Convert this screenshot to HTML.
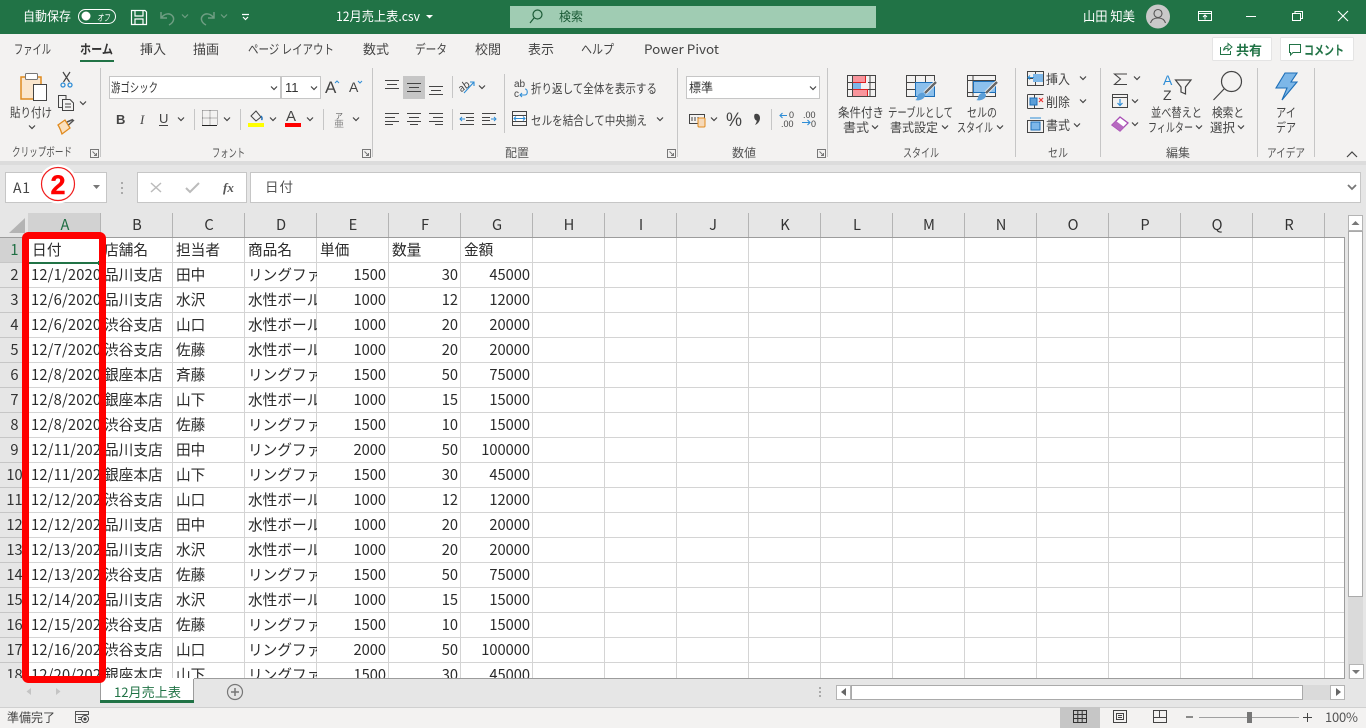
<!DOCTYPE html>
<html lang="ja"><head><meta charset="utf-8"><title>12月売上表.csv - Excel</title>
<style>
*{box-sizing:border-box}
html,body{margin:0;padding:0;width:1366px;height:728px;overflow:hidden;background:#e6e6e6;font-family:"Liberation Sans","Noto Sans CJK JP",sans-serif}
.a{position:absolute}
#title{left:0;top:0;width:1366px;height:34px;background:#217346}
#ribbon{left:0;top:34px;width:1366px;height:127px;background:#f3f2f1}
#shadow{left:0;top:161px;width:1366px;height:4px;background:#dcdcdc}
#fbar{left:0;top:165px;width:1366px;height:48px;background:#e6e6e6}
.box{background:#fff;border:1px solid #c6c6c6}
#colh{left:0;top:213px;width:1345px;height:25px;background:#e6e6e6;border-bottom:1px solid #9c9c9c}
#colh span{position:absolute;top:0;height:24px;width:72px;padding-left:1px;border-right:1px solid #b4b4b4;text-align:center;font:14.67px/24px "Noto Sans CJK JP",sans-serif;color:#333}
#rowh{left:0;top:238px;width:29px;height:440px;overflow:hidden;background:#e6e6e6;border-right:1px solid #9c9c9c}
#rowh span{display:block;height:25px;width:28px;padding-left:1px;border-bottom:1px solid #c6c6c6;text-align:center;font:14.67px/23px "Noto Sans CJK JP",sans-serif;color:#333}
#sheet{left:29px;top:238px;width:1316px;height:441px;overflow:hidden;background-color:#fff;border-right:1px solid #9c9c9c;border-bottom:1px solid #9c9c9c;background-image:linear-gradient(to left,#d4d4d4 1px,transparent 1px),linear-gradient(to top,#d4d4d4 1px,transparent 1px);background-size:72px 25px}
table{border-collapse:collapse;table-layout:fixed;width:504px;position:absolute;left:0;top:0}
td{width:72px;height:25px;padding:0 3px 0 3px;overflow:hidden;white-space:nowrap;vertical-align:top;font:14.67px/23px "Noto Sans CJK JP",sans-serif;color:#2b2b2b}
td.d{padding-left:2px;padding-right:0;letter-spacing:.2px}
td.n{text-align:right}
#tabs{left:0;top:679px;width:1366px;height:28px;background:#e6e6e6}
#status{left:0;top:707px;width:1366px;height:21px;background:#f3f2f1;border-top:1px solid #d0d0d0}
svg{position:absolute;left:0;top:0;font-family:"Noto Sans CJK JP",sans-serif}
</style></head><body>
<div id="title" class="a"></div>
<div id="ribbon" class="a"></div>
<div id="shadow" class="a"></div>
<div id="fbar" class="a"></div>
<div class="a box" style="left:5px;top:172px;width:102px;height:31px"></div>
<div class="a box" style="left:137px;top:172px;width:110px;height:31px"></div>
<div class="a box" style="left:250px;top:172px;width:1111px;height:31px"></div>
<div id="colh" class="a">
<span style="left:28px;width:73px;padding-left:2px;background:#d2d2d2;color:#1f6e43">A</span><span style="left:101px">B</span><span style="left:173px">C</span><span style="left:245px">D</span><span style="left:317px">E</span><span style="left:389px">F</span><span style="left:461px">G</span><span style="left:533px">H</span><span style="left:605px">I</span><span style="left:677px">J</span><span style="left:749px">K</span><span style="left:821px">L</span><span style="left:893px">M</span><span style="left:965px">N</span><span style="left:1037px">O</span><span style="left:1109px">P</span><span style="left:1181px">Q</span><span style="left:1253px">R</span>
</div>
<div id="rowh" class="a"><span style="background:#d2d2d2;color:#1f6e43">1</span><span>2</span><span>3</span><span>4</span><span>5</span><span>6</span><span>7</span><span>8</span><span>9</span><span>10</span><span>11</span><span>12</span><span>13</span><span>14</span><span>15</span><span>16</span><span>17</span><span>18</span></div>
<div id="sheet" class="a">
<table>
<tr><td class="d" style="padding-left:3px">日付</td><td>店舗名</td><td>担当者</td><td>商品名</td><td>単価</td><td>数量</td><td>金額</td></tr>
<tr><td class="d">12/1/2020</td><td>品川支店</td><td>田中</td><td>リングファ</td><td class="n">1500</td><td class="n">30</td><td class="n">45000</td></tr>
<tr><td class="d">12/6/2020</td><td>品川支店</td><td>水沢</td><td>水性ボール</td><td class="n">1000</td><td class="n">12</td><td class="n">12000</td></tr>
<tr><td class="d">12/6/2020</td><td>渋谷支店</td><td>山口</td><td>水性ボール</td><td class="n">1000</td><td class="n">20</td><td class="n">20000</td></tr>
<tr><td class="d">12/7/2020</td><td>渋谷支店</td><td>佐藤</td><td>水性ボール</td><td class="n">1000</td><td class="n">20</td><td class="n">20000</td></tr>
<tr><td class="d">12/8/2020</td><td>銀座本店</td><td>斉藤</td><td>リングファ</td><td class="n">1500</td><td class="n">50</td><td class="n">75000</td></tr>
<tr><td class="d">12/8/2020</td><td>銀座本店</td><td>山下</td><td>水性ボール</td><td class="n">1000</td><td class="n">15</td><td class="n">15000</td></tr>
<tr><td class="d">12/8/2020</td><td>渋谷支店</td><td>佐藤</td><td>リングファ</td><td class="n">1500</td><td class="n">10</td><td class="n">15000</td></tr>
<tr><td class="d">12/11/2020</td><td>品川支店</td><td>田中</td><td>リングファ</td><td class="n">2000</td><td class="n">50</td><td class="n">100000</td></tr>
<tr><td class="d">12/11/2020</td><td>銀座本店</td><td>山下</td><td>リングファ</td><td class="n">1500</td><td class="n">30</td><td class="n">45000</td></tr>
<tr><td class="d">12/12/2020</td><td>渋谷支店</td><td>山口</td><td>水性ボール</td><td class="n">1000</td><td class="n">12</td><td class="n">12000</td></tr>
<tr><td class="d">12/12/2020</td><td>品川支店</td><td>田中</td><td>水性ボール</td><td class="n">1000</td><td class="n">20</td><td class="n">20000</td></tr>
<tr><td class="d">12/13/2020</td><td>品川支店</td><td>水沢</td><td>水性ボール</td><td class="n">1000</td><td class="n">20</td><td class="n">20000</td></tr>
<tr><td class="d">12/13/2020</td><td>渋谷支店</td><td>佐藤</td><td>リングファ</td><td class="n">1500</td><td class="n">50</td><td class="n">75000</td></tr>
<tr><td class="d">12/14/2020</td><td>品川支店</td><td>水沢</td><td>水性ボール</td><td class="n">1000</td><td class="n">15</td><td class="n">15000</td></tr>
<tr><td class="d">12/15/2020</td><td>渋谷支店</td><td>佐藤</td><td>リングファ</td><td class="n">1500</td><td class="n">10</td><td class="n">15000</td></tr>
<tr><td class="d">12/16/2020</td><td>渋谷支店</td><td>山口</td><td>リングファ</td><td class="n">2000</td><td class="n">50</td><td class="n">100000</td></tr>
<tr><td class="d">12/20/2020</td><td>銀座本店</td><td>山下</td><td>リングファ</td><td class="n">1500</td><td class="n">30</td><td class="n">45000</td></tr>
</table>
</div>
<div id="tabs" class="a"></div>
<div id="status" class="a"></div>

<svg width="1366" height="728" viewBox="0 0 1366 728" xmlns="http://www.w3.org/2000/svg">
<defs>
<path id="c" d="M-3 -1.500L0 1.500L3 -1.500" fill="none" stroke="#444" stroke-width="1.200"/>
<path id="cw" d="M-3 -1.500L0 1.500L3 -1.500" fill="none" stroke="#6f9e83" stroke-width="1.200"/>
<path id="lau" d="M1.500 1.500H9.500V9.500H1.500ZM3.500 3.500L7.500 7.500M7.500 5V7.500H5" fill="none" stroke="#777" stroke-width="1"/>
</defs>

<!-- title bar -->
<g fill="#fff">
<text x="23" y="21" font-size="13" textLength="48" lengthAdjust="spacingAndGlyphs">自動保存</text>
<text x="336" y="21" font-size="13" textLength="84" lengthAdjust="spacingAndGlyphs">12月売上表.csv</text>
<path d="M426 15h7l-3.500 3.500z"/>
<text x="1083" y="21" font-size="13" textLength="52" lengthAdjust="spacingAndGlyphs">山田 知美</text>
<text x="97" y="21" font-size="9.500" font-style="italic" textLength="13" lengthAdjust="spacingAndGlyphs">オフ</text>
<circle cx="86" cy="16" r="4.500"/>
</g>
<rect x="78.500" y="9.500" width="37" height="14" rx="7" fill="none" stroke="#fff"/>
<path d="M131.500 10.500H145L146.500 12V24.500H131.500ZM135 10.500V16H143V10.500M135 24.500V19H143V24.500" fill="none" stroke="#fff" stroke-width="1.200"/>
<path d="M161 12V18H167M161.500 17.500C165 13 170 13 172.500 16C175 19 173 23 169 25" fill="none" stroke="#6f9e83" stroke-width="1.500"/>
<use href="#cw" x="185" y="16"/>
<path d="M214 12V18H208M213.500 17.500C210 13 205 13 202.500 16C200 19 202 23 206 25" fill="none" stroke="#6f9e83" stroke-width="1.500"/>
<use href="#cw" x="224" y="16"/>
<path d="M242 14.500H249M243 17L245.500 19.500L248 17" fill="none" stroke="#fff" stroke-width="1.200"/>
<rect x="510" y="6" width="366" height="22" fill="#a0ccb3"/>
<circle cx="537.500" cy="14.500" r="4.500" fill="none" stroke="#1c5b37" stroke-width="1.200"/>
<path d="M534 18L530 23" stroke="#1c5b37" stroke-width="1.200"/>
<text x="559" y="21" font-size="12.500" fill="#1c5b37" textLength="24" lengthAdjust="spacingAndGlyphs">検索</text>
<circle cx="1158" cy="16.500" r="12" fill="#c9c9c9"/>
<circle cx="1158" cy="13.500" r="4" fill="none" stroke="#555" stroke-width="1.100"/>
<path d="M1150.500 23C1151.500 19.500 1154 18 1158 18C1162 18 1164.500 19.500 1165.500 23" fill="none" stroke="#555" stroke-width="1.100"/>
<path d="M1198.500 11.500H1211.500V20.500H1198.500ZM1198.500 13.500H1211.500M1205 19.500V15M1203 17L1205 15L1207 17" fill="none" stroke="#fff"/>
<path d="M1246 16.500H1256" stroke="#fff" stroke-width="1"/>
<path d="M1292.500 13.500H1300.500V20.500H1292.500ZM1295 13.500V11.500H1302.500V18.500H1300.500" fill="none" stroke="#fff"/>
<path d="M1338 11L1348 21M1348 11L1338 21" stroke="#fff" stroke-width="1.100"/>

<!-- ribbon tabs -->
<g fill="#444" font-size="13">
<text x="14" y="54" textLength="37" lengthAdjust="spacingAndGlyphs">ファイル</text>
<text x="80" y="54" textLength="33" lengthAdjust="spacingAndGlyphs" font-weight="700" fill="#333">ホーム</text>
<text x="140" y="54" textLength="26" lengthAdjust="spacingAndGlyphs">挿入</text>
<text x="193" y="54" textLength="26" lengthAdjust="spacingAndGlyphs">描画</text>
<text x="248" y="54" textLength="86" lengthAdjust="spacingAndGlyphs">ページ レイアウト</text>
<text x="363" y="54" textLength="26" lengthAdjust="spacingAndGlyphs">数式</text>
<text x="415" y="54" textLength="32" lengthAdjust="spacingAndGlyphs">データ</text>
<text x="475" y="54" textLength="26" lengthAdjust="spacingAndGlyphs">校閲</text>
<text x="528" y="54" textLength="26" lengthAdjust="spacingAndGlyphs">表示</text>
<text x="581" y="54" textLength="33" lengthAdjust="spacingAndGlyphs">ヘルプ</text>
<text x="644" y="54" textLength="75" lengthAdjust="spacingAndGlyphs">Power Pivot</text>
</g>
<rect x="80" y="60" width="34" height="2" fill="#217346"/>
<rect x="1212.500" y="37.500" width="59" height="23" rx="1" fill="#fff" stroke="#e4e4e4"/>
<rect x="1280.500" y="37.500" width="73" height="23" rx="1" fill="#fff" stroke="#e4e4e4"/>
<path d="M1220.500 47V54.500H1230.500V51M1223.500 50.500C1224 47.500 1225.500 46 1228 46V43.500L1232 47L1228 50.500V48.300C1226 48.300 1224.500 49 1223.500 50.500Z" fill="none" stroke="#217346"/>
<text x="1236" y="55" font-size="13" font-weight="700" fill="#217346" textLength="26" lengthAdjust="spacingAndGlyphs">共有</text>
<path d="M1289.500 44.500H1300.500V52.500H1293L1290.500 55V52.500H1289.500Z" fill="none" stroke="#217346"/>
<text x="1304" y="55" font-size="13" font-weight="700" fill="#217346" textLength="40" lengthAdjust="spacingAndGlyphs">コメント</text>

<!-- separators -->
<g fill="#c6c6c6">
<rect x="100" y="68" width="1" height="89"/><rect x="372" y="68" width="1" height="89"/><rect x="677" y="68" width="1" height="89"/><rect x="827" y="68" width="1" height="89"/><rect x="1015" y="68" width="1" height="89"/><rect x="1100" y="68" width="1" height="89"/><rect x="1257" y="68" width="1" height="89"/><rect x="1314" y="68" width="1" height="89"/>
<rect x="194" y="109" width="1" height="21"/><rect x="240" y="109" width="1" height="21"/><rect x="323" y="109" width="1" height="21"/>
<rect x="452" y="76" width="1" height="22"/><rect x="452" y="109" width="1" height="21"/><rect x="504" y="74" width="1" height="59"/><rect x="771" y="109" width="1" height="21"/>
</g>

<!-- group labels -->
<g fill="#555" font-size="12">
<text x="12" y="156" textLength="60" lengthAdjust="spacingAndGlyphs">クリップボード</text>
<text x="212" y="157" textLength="33" lengthAdjust="spacingAndGlyphs">フォント</text>
<text x="505" y="157" textLength="24" lengthAdjust="spacingAndGlyphs">配置</text>
<text x="732" y="157" textLength="24" lengthAdjust="spacingAndGlyphs">数値</text>
<text x="903" y="157" textLength="36" lengthAdjust="spacingAndGlyphs">スタイル</text>
<text x="1048" y="157" textLength="20" lengthAdjust="spacingAndGlyphs">セル</text>
<text x="1166" y="157" textLength="24" lengthAdjust="spacingAndGlyphs">編集</text>
<text x="1267" y="157" textLength="38" lengthAdjust="spacingAndGlyphs">アイデア</text>
</g>
<use href="#lau" x="89" y="148"/><use href="#lau" x="361" y="148"/><use href="#lau" x="666" y="148"/><use href="#lau" x="816" y="148"/>
<path d="M1347 157L1352 152L1357 157" fill="none" stroke="#444" stroke-width="1.200"/>

<!-- clipboard -->
<rect x="21" y="77" width="20" height="22" fill="#fbe6cc" stroke="#e08a1e" stroke-width="1.500"/>
<rect x="25.500" y="73.500" width="12" height="6" rx="1" fill="#fff" stroke="#777"/>
<rect x="33.500" y="84.500" width="13" height="16" fill="#fff" stroke="#444"/>
<text x="10" y="117" font-size="12.500" fill="#444" textLength="42" lengthAdjust="spacingAndGlyphs">貼り付け</text>
<use href="#c" x="32" y="127"/>
<path d="M63 72L69.500 82M70 72L63.500 82" stroke="#444" stroke-width="1.200"/>
<circle cx="63" cy="85" r="2" fill="none" stroke="#2e8dd6" stroke-width="1.300"/><circle cx="70" cy="85" r="2" fill="none" stroke="#2e8dd6" stroke-width="1.300"/>
<path d="M62.500 107.500H58.500V95.500H66V99M62.500 99.500H70L73.500 103V110.500H62.500ZM65 104H71M65 107H71" fill="none" stroke="#444"/>
<use href="#c" x="83" y="103"/>
<path d="M58 125L65 120L70 128L62 134C61 131 60 128 58 125Z" fill="#fbe0bd" stroke="#e08a1e" stroke-width="1.300"/>
<path d="M67 122L73 119.500M68.500 125L74 120" stroke="#555" stroke-width="1.500"/>

<!-- font -->
<rect x="109.500" y="76.500" width="171" height="22" fill="#fff" stroke="#c6c6c6"/>
<rect x="281.500" y="76.500" width="39" height="22" fill="#fff" stroke="#c6c6c6"/>
<text x="111" y="92" font-size="12.500" fill="#333" textLength="47" lengthAdjust="spacingAndGlyphs">游ゴシック</text>
<text x="285" y="92" font-size="13" fill="#333" font-family="Liberation Sans">11</text>
<use href="#c" x="274" y="88"/><use href="#c" x="314" y="88"/>
<text x="325" y="93" font-size="17" fill="#444" font-family="Liberation Sans">A</text>
<path d="M335 83L337 81L339 83" fill="none" stroke="#2e8dd6"/>
<text x="349" y="92" font-size="14" fill="#444" font-family="Liberation Sans">A</text>
<path d="M358 81L360 83L362 81" fill="none" stroke="#2e8dd6"/>
<text x="116" y="124" font-size="13" font-weight="700" fill="#444" font-family="Liberation Sans">B</text>
<text x="140" y="124" font-size="13" font-style="italic" fill="#444" font-family="Liberation Serif">I</text>
<text x="159" y="123" font-size="13" fill="#444" font-family="Liberation Sans">U</text>
<path d="M159 125.500H168" stroke="#444"/>
<use href="#c" x="181" y="119"/>
<path d="M202.500 110.500H217.500V125.500M202.500 110.500V125.500M210 110.500V125.500M202.500 118H217.500" fill="none" stroke="#777" stroke-dasharray="1 1"/>
<path d="M202 125.500H217" stroke="#222" stroke-width="1"/>
<use href="#c" x="227" y="119"/>
<path d="M251 116L256 111L261 117L256 121Z" fill="none" stroke="#444"/>
<path d="M261 116C262 117 262.500 119 261.500 120" fill="none" stroke="#1d6fb8" stroke-width="1.500"/>
<rect x="248" y="123" width="16" height="4" fill="#ff0"/>
<use href="#c" x="273" y="119"/>
<text x="286" y="121" font-size="15" fill="#444" font-family="Liberation Sans">A</text>
<rect x="285" y="123" width="16" height="4" fill="#f00"/>
<use href="#c" x="310" y="119"/>
<text x="335" y="119" font-size="8" fill="#666" textLength="8" lengthAdjust="spacingAndGlyphs">ア</text>
<text x="334" y="127" font-size="9" fill="#888" textLength="10" lengthAdjust="spacingAndGlyphs">亜</text>
<use href="#c" x="356" y="119"/>

<!-- alignment -->
<rect x="403" y="76" width="22" height="23" fill="#c6c6c6"/>
<g stroke="#444" fill="none">
<path d="M385 80.500H399M387 84.500H397M385 88.500H399"/>
<path d="M407 83.500H421M409 87.500H419M407 91.500H421"/>
<path d="M429 86.500H443M431 90.500H441M429 94.500H443"/>
<path d="M385 113.500H399M385 117.500H395M385 121.500H399M385 124.500H393"/>
<path d="M407 113.500H421M409 117.500H419M407 121.500H421M410 124.500H418"/>
<path d="M429 113.500H443M433 117.500H443M429 121.500H443M435 124.500H443"/>
<path d="M460 113.500H474M466 117.500H474M466 120.500H474M460 124.500H474"/>
<path d="M482 113.500H496M482 117.500H490M482 120.500H490M482 124.500H496"/>
</g>
<path d="M460 119H465M462 117L460 119L462 121" fill="none" stroke="#2e8dd6"/>
<path d="M491 119H496M494 117L496 119L494 121" fill="none" stroke="#2e8dd6"/>
<text x="459" y="90" font-size="10" fill="#444" transform="rotate(-35 464 88)">ab</text>
<path d="M464 93L474 82M470 82H474V86" fill="none" stroke="#2e8dd6" stroke-width="1.100"/>
<use href="#c" x="482" y="87"/>
<text x="514" y="87" font-size="10" fill="#444" font-family="Liberation Sans">ab</text>
<text x="514" y="97" font-size="10" fill="#444" font-family="Liberation Sans">c</text>
<path d="M520 95H525C528 95 528 89 525 89M522 93L520 95L522 97" fill="none" stroke="#2e8dd6" stroke-width="1.100"/>
<text x="531" y="93" font-size="12.500" fill="#444" textLength="126" lengthAdjust="spacingAndGlyphs">折り返して全体を表示する</text>
<path d="M512.500 111.500H526.500V125.500H512.500ZM512.500 115.500H526.500M512.500 121.500H526.500" fill="none" stroke="#444"/>
<rect x="513" y="116" width="13" height="5" fill="#fff"/>
<path d="M514 118.500H525M516 116.500L514 118.500L516 120.500M523 116.500L525 118.500L523 120.500" fill="none" stroke="#2e8dd6"/>
<text x="531" y="125" font-size="12.500" fill="#444" textLength="116" lengthAdjust="spacingAndGlyphs">セルを結合して中央揃え</text>
<use href="#c" x="660" y="119"/>

<!-- number -->
<rect x="686.500" y="76.500" width="133" height="22" fill="#fff" stroke="#c6c6c6"/>
<text x="689" y="92" font-size="12.500" fill="#333" textLength="24" lengthAdjust="spacingAndGlyphs">標準</text>
<use href="#c" x="813" y="88"/>
<path d="M689.500 114.500H704.500V123.500H689.500ZM692 117V121M695 117V121M698 117V121" fill="none" stroke="#444"/>
<rect x="698" y="118" width="7" height="9" rx="1" fill="#f6d9b8" stroke="#e08a1e"/>
<use href="#c" x="714" y="119"/>
<text x="726" y="126" font-size="19" fill="#444" font-family="Liberation Sans" textLength="16" lengthAdjust="spacingAndGlyphs">%</text>
<path d="M755 114C758 113 760 115 760 118C760 121 758 124 755 125C756.500 122.500 757 121 756.500 120.500C754 120 753.500 115 755 114Z" fill="#444"/>
<g font-size="9" fill="#444" font-family="Liberation Sans">
<text x="789" y="118">0</text><text x="781" y="127">.00</text>
<text x="803" y="118">.00</text><text x="811" y="127">0</text>
</g>
<path d="M780 115.500H787M782.500 113L780 115.500L782.500 118M802 122.500H810M807.500 120L810 122.500L807.500 125" fill="none" stroke="#2e8dd6" stroke-width="1.100"/>

<!-- styles -->
<g>
<rect x="852" y="75.500" width="13" height="7" fill="#f8959c"/><rect x="852" y="82.500" width="9" height="7" fill="#7db7e8"/><rect x="852" y="89.500" width="15" height="7" fill="#f8959c"/>
<path d="M852.500 75.500H865.500V82.500H852.500ZM852.500 89.500H867.500V96.500H852.500Z" fill="none" stroke="#d22"/>
<path d="M847.500 75.500H875.500V96.500H847.500ZM847.500 82.500H852M847.500 89.500H852M868 82.500H875.500M868 89.500H875.500M870 75.500V96.500" fill="none" stroke="#444"/>
<path d="M852.500 75.500V96.500" stroke="#444"/>
<rect x="915" y="82" width="19" height="14" fill="#8cc0ec"/>
<path d="M906.500 75.500H934.500V96.500H906.500ZM906.500 82.500H915M906.500 89.500H915M915.500 75.500V96.500M925.500 75.500V82" fill="none" stroke="#444"/>
<path d="M915.500 82.500H934.500V96.500H915.500Z" fill="none" stroke="#1d6fb8"/>
<rect x="973" y="81" width="22" height="12" fill="#8cc0ec"/>
<path d="M967.500 75.500H995.500V96.500H967.500ZM967.500 80.500H995.500M973 75.500V96.500M967.500 92.500H995.500" fill="none" stroke="#444"/>
<path d="M973.500 81.500H995.500V92.500H973.500Z" fill="none" stroke="#1d6fb8"/>
<path d="M925 93L936 82" stroke="#fff" stroke-width="4"/><path d="M925 93L936 82" stroke="#666" stroke-width="2.500"/>
<path d="M915 100C918 100 916 94 921 93C924 92 926 95 924.500 97C923 100 918 101 915 100Z" fill="#5c9fd8"/>
<path d="M986 93L997 82" stroke="#fff" stroke-width="4"/><path d="M986 93L997 82" stroke="#666" stroke-width="2.500"/>
<path d="M976 100C979 100 977 94 982 93C985 92 987 95 985.500 97C984 100 979 101 976 100Z" fill="#5c9fd8"/>
</g>
<g fill="#444" font-size="12.500">
<text x="838" y="117" textLength="46" lengthAdjust="spacingAndGlyphs">条件付き</text>
<text x="843" y="132" textLength="26" lengthAdjust="spacingAndGlyphs">書式</text>
<text x="888" y="117" textLength="65" lengthAdjust="spacingAndGlyphs">テーブルとして</text>
<text x="890" y="132" textLength="48" lengthAdjust="spacingAndGlyphs">書式設定</text>
<text x="967" y="117" textLength="30" lengthAdjust="spacingAndGlyphs">セルの</text>
<text x="957" y="132" textLength="36" lengthAdjust="spacingAndGlyphs">スタイル</text>
</g>
<use href="#c" x="875" y="127"/><use href="#c" x="945" y="127"/><use href="#c" x="1000" y="127"/>

<!-- cells -->
<path d="M1027.500 71.500H1043.500V85.500H1027.500ZM1027.500 78.500H1043.500M1035.500 71.500V85.500" fill="none" stroke="#444"/>
<rect x="1033" y="74" width="10" height="8" fill="#7db7e8"/>
<path d="M1028 77.500H1034M1030 75.500L1028 77.500L1030 79.500" fill="none" stroke="#2e8dd6"/>
<path d="M1027.500 94.500H1043.500M1027.500 108.500H1043.500M1027.500 94.500V108.500M1034.500 94.500V99M1034.500 105V108.500" fill="none" stroke="#444"/>
<rect x="1030" y="98" width="7" height="7" fill="#5c9fd8" stroke="#1d6fb8"/>
<path d="M1039 98L1043 102M1043 98L1039 102" stroke="#e33" stroke-width="1.200"/>
<path d="M1027.500 120.500H1043.500V132.500H1027.500ZM1027.500 120.500V132.500" fill="none" stroke="#444"/>
<rect x="1031" y="122" width="9" height="8" fill="#7db7e8" stroke="#1d6fb8"/>
<path d="M1030 118H1041" stroke="#2e8dd6"/>
<g fill="#444" font-size="13">
<text x="1046" y="84" textLength="24" lengthAdjust="spacingAndGlyphs">挿入</text>
<text x="1046" y="107" textLength="24" lengthAdjust="spacingAndGlyphs">削除</text>
<text x="1046" y="130" textLength="24" lengthAdjust="spacingAndGlyphs">書式</text>
</g>
<use href="#c" x="1083" y="78"/><use href="#c" x="1083" y="101"/><use href="#c" x="1077" y="125"/>

<!-- editing -->
<path d="M1127 74H1114.500L1120.500 79L1114.500 84.500H1127" fill="none" stroke="#444" stroke-width="1.100"/>
<use href="#c" x="1137" y="78"/>
<path d="M1112.500 94.500H1127.500V107.500H1112.500ZM1112.500 97.500H1127.500" fill="none" stroke="#444"/>
<path d="M1120 99V105.500M1117.500 103L1120 105.500L1122.500 103" fill="none" stroke="#2e8dd6" stroke-width="1.200"/>
<use href="#c" x="1135" y="101"/>
<path d="M1112 125L1120 117L1128 123L1120 131Z" fill="#fff" stroke="#a84db5" stroke-width="1.300"/>
<path d="M1112 125L1116 121L1124 127L1120 131Z" fill="#b66ac0"/>
<use href="#c" x="1135" y="124"/>
<text x="1163" y="85" font-size="14" fill="#2e8dd6" font-family="Liberation Sans">A</text>
<text x="1163" y="100" font-size="14" fill="#444" font-family="Liberation Sans">Z</text>
<path d="M1175.500 80H1191L1185.500 87V94L1181 92V87Z" fill="none" stroke="#444" stroke-width="1.200"/>
<circle cx="1231.500" cy="81.500" r="10" fill="none" stroke="#444" stroke-width="1.200"/>
<path d="M1224.500 88.500L1213.500 100" stroke="#444" stroke-width="1.200"/>
<g fill="#444" font-size="12.500">
<text x="1151" y="117" textLength="51" lengthAdjust="spacingAndGlyphs">並べ替えと</text>
<text x="1148" y="132" textLength="45" lengthAdjust="spacingAndGlyphs">フィルター</text>
<text x="1212" y="117" textLength="32" lengthAdjust="spacingAndGlyphs">検索と</text>
<text x="1210" y="132" textLength="25" lengthAdjust="spacingAndGlyphs">選択</text>
<text x="1276" y="117" textLength="20" lengthAdjust="spacingAndGlyphs">アイ</text>
<text x="1276" y="132" textLength="20" lengthAdjust="spacingAndGlyphs">デア</text>
</g>
<use href="#c" x="1199" y="127"/><use href="#c" x="1241" y="127"/>
<path d="M1285 73H1297L1291 82H1297L1282 100L1287 88H1276Z" fill="#7db7e8" stroke="#1d6fb8" stroke-width="1.100"/>

<!-- formula bar -->
<text x="13" y="193" font-size="14" fill="#444" textLength="17">A1</text>
<path d="M93 185h7l-3.500 4z" fill="#777"/>
<g fill="#aaa"><rect x="121" y="182" width="2" height="2"/><rect x="121" y="187" width="2" height="2"/><rect x="121" y="192" width="2" height="2"/></g>
<path d="M151 183L161 192M161 183L151 192" stroke="#bbb" stroke-width="1.500"/>
<path d="M186 188L190 192L199 183" fill="none" stroke="#bbb" stroke-width="2"/>
<text x="223" y="192" font-size="13" font-style="italic" font-weight="700" fill="#555" font-family="Liberation Serif">fx</text>
<text x="265" y="192" font-size="13.500" fill="#555" textLength="28">日付</text>
<path d="M1348 185L1352 189L1356 185" fill="none" stroke="#777" stroke-width="1.800"/>

<!-- corner -->
<path d="M25 218V233H9Z" fill="#b4b4b4"/>

<!-- selected cell -->
<rect x="29" y="262" width="71" height="2" fill="#217346"/>
<rect x="98" y="261" width="3" height="4" fill="#217346"/>

<!-- vertical scrollbar -->
<rect x="1348" y="215" width="15" height="464" fill="#dadada"/>
<rect x="1348.500" y="215.500" width="14" height="15" fill="#fff" stroke="#b4b4b4"/>
<path d="M1351.500 225H1359.500L1355.500 221Z" fill="#777"/>
<rect x="1348.500" y="231.500" width="14" height="365" fill="#fff" stroke="#aaa"/>
<rect x="1349.500" y="664.500" width="14" height="14" fill="#fff" stroke="#b4b4b4"/>
<path d="M1352 670H1360L1356 674Z" fill="#777"/>

<!-- horizontal scrollbar -->
<rect x="851" y="685" width="494" height="15" fill="#dadada"/>
<rect x="836.500" y="685.500" width="14" height="14" fill="#fff" stroke="#b4b4b4"/>
<path d="M846 688V696L841 692Z" fill="#666"/>
<rect x="851.500" y="685.500" width="451" height="14" fill="#fff" stroke="#aaa"/>
<rect x="1330.500" y="685.500" width="14" height="14" fill="#fff" stroke="#b4b4b4"/>
<path d="M1336 688V696L1341 692Z" fill="#666"/>
<g fill="#aaa"><rect x="819" y="687" width="2" height="2"/><rect x="819" y="691" width="2" height="2"/><rect x="819" y="695" width="2" height="2"/></g>

<!-- sheet tabs -->
<rect x="100" y="678" width="94" height="24" fill="#fff"/>
<path d="M100.500 679V702M193.500 679V702" stroke="#9c9c9c"/>
<rect x="100" y="700" width="94" height="3" fill="#217346"/>
<text x="114" y="697" font-size="13" fill="#217346" textLength="67" lengthAdjust="spacingAndGlyphs">12月売上表</text>
<circle cx="235" cy="692" r="7.500" fill="none" stroke="#777" stroke-width="1.200"/>
<path d="M231 692H239M235 688V696" stroke="#777" stroke-width="1.500"/>
<path d="M31 688V695L26.500 691.500Z" fill="#c4c4c4"/><path d="M56 688V695L60.500 691.500Z" fill="#c4c4c4"/>

<!-- status bar -->
<text x="7" y="722" font-size="12.500" fill="#444" textLength="48" lengthAdjust="spacingAndGlyphs">準備完了</text>
<path d="M75.500 711.500H88.500V714.500H75.500ZM75.500 714.500V722.500H81M78 717.500H82M78 719.500H81" fill="none" stroke="#555"/>
<circle cx="85" cy="719" r="3.500" fill="#fff" stroke="#444"/><circle cx="85" cy="719" r="1.600" fill="#444"/>
<rect x="1060" y="707" width="40" height="21" fill="#c6c6c6"/>
<path d="M1073.500 710.500H1086.500V722.500H1073.500ZM1077.800 710.500V722.500M1082.200 710.500V722.500M1073.500 714.500H1086.500M1073.500 718.500H1086.500" fill="none" stroke="#333"/>
<path d="M1113.500 710.500H1126.500V722.500H1113.500ZM1116.500 713.500H1123.500V719.500H1116.500ZM1118 715.500H1122M1118 717.500H1122" fill="none" stroke="#444"/>
<path d="M1153.500 710.500H1166.500V722.500H1153.500ZM1159.500 710.500V717.500H1153.500M1159.500 717.500H1166.500" fill="none" stroke="#444"/>
<path d="M1186 717H1193" stroke="#444" stroke-width="1.200"/>
<rect x="1199" y="717" width="100" height="1" fill="#a0a0a0"/>
<rect x="1247" y="712" width="5" height="11" fill="#777"/>
<path d="M1303 717.500H1312M1307.500 713V722" stroke="#444"/>
<text x="1325" y="722" font-size="13" fill="#555" textLength="33">100%</text>

<!-- annotations -->
<rect x="25.500" y="235.500" width="77" height="444" rx="3" fill="none" stroke="#f00" stroke-width="7"/>
<circle cx="58" cy="184" r="19.500" fill="#fff"/>
<circle cx="58" cy="184" r="16.500" fill="#fff" stroke="#f01c1c" stroke-width="1.200"/>
<text x="58" y="194" font-size="27" font-weight="700" fill="#f00" stroke="#f00" stroke-width=".4" text-anchor="middle" font-family="Liberation Sans">2</text>
</svg>
</body></html>
